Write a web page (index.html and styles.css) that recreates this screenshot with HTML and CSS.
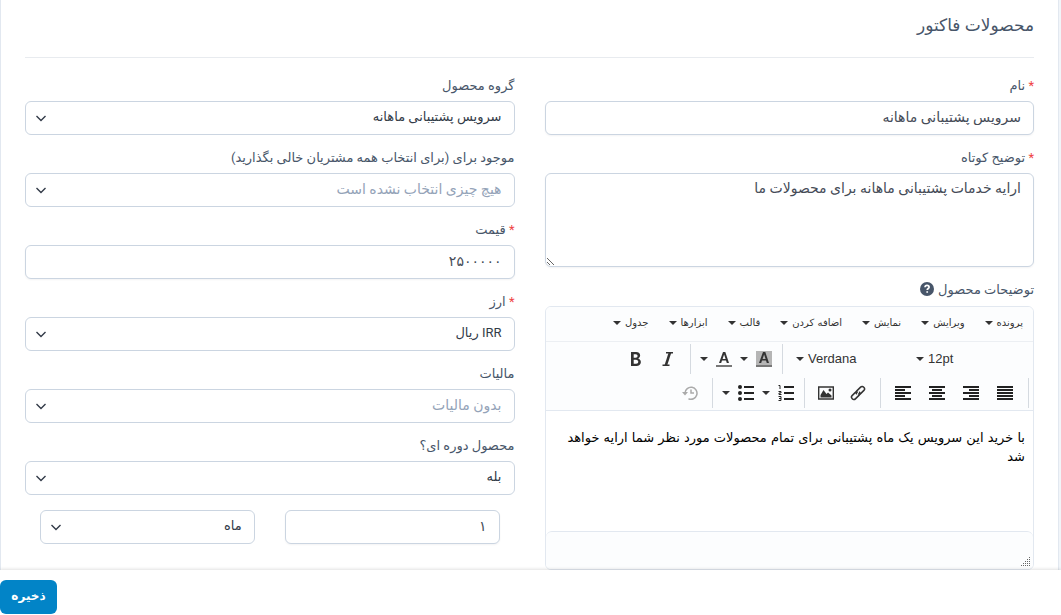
FILE: index.html
```html
<!DOCTYPE html>
<html lang="fa" dir="rtl">
<head>
<meta charset="utf-8">
<meta name="viewport" content="width=device-width, initial-scale=1">
<title>محصولات فاکتور</title>
<link rel="stylesheet" href="styles.css">
</head>
<body>
<svg class="sprite" aria-hidden="true">
  <symbol id="chevron" viewBox="0 0 12 12"><path d="M1.500 4l4.500 4.500L10.500 4" fill="none" stroke="#333b48" stroke-width="1.400"/></symbol>
  <symbol id="caret" viewBox="0 0 8 4"><path d="M0 0h8L4 4z" fill="#333"/></symbol>
</svg>
<main class="viewport">
  <form class="panel" id="product-form">
    <h1 class="panel-title">محصولات فاکتور</h1>
    <div class="columns">
      <div class="column">
        <div class="field">
          <label class="label" for="name"><span class="required">*</span> نام</label>
          <input class="control" id="name" type="text" value="سرویس پشتیبانی ماهانه">
        </div>
        <div class="field">
          <label class="label" for="short"><span class="required">*</span> توضیح کوتاه</label>
          <textarea class="control control-area" id="short">ارایه خدمات پشتیبانی ماهانه برای محصولات ما</textarea>
        </div>
        <div class="field">
          <label class="label label-help" for="body">توضیحات محصول
            <svg width="14" height="14" viewBox="0 0 14 14"><circle cx="7" cy="7" r="7" fill="#475569"/><path d="M5 5.300C5.100 4 6 3.400 7 3.400c1.200 0 2.100.7 2.100 1.800C9.100 6.500 7.200 6.500 7.200 8.100M7.200 9.300v1.500" fill="none" stroke="#fff" stroke-width="1.700"/></svg>
          </label>
          <div class="editor">
            <div class="menubar">
              <button type="button" class="menu">پرونده<svg class="caret"><use href="#caret"/></svg></button>
              <button type="button" class="menu">ویرایش<svg class="caret"><use href="#caret"/></svg></button>
              <button type="button" class="menu">نمایش<svg class="caret"><use href="#caret"/></svg></button>
              <button type="button" class="menu">اضافه کردن<svg class="caret"><use href="#caret"/></svg></button>
              <button type="button" class="menu">قالب<svg class="caret"><use href="#caret"/></svg></button>
              <button type="button" class="menu">ابزارها<svg class="caret"><use href="#caret"/></svg></button>
              <button type="button" class="menu">جدول<svg class="caret"><use href="#caret"/></svg></button>
            </div>
            <div class="toolbar" dir="ltr">
              <div class="tools">
                <div class="group">
                  <button type="button" class="tool" aria-label="Bold"><svg width="16" height="16" viewBox="0 0 16 16"><path fill="#333" fill-rule="evenodd" d="M3 1h5.200c4.700 0 5.100 5 2 6.500C14.300 8.700 13.700 15 8.400 15H3zM5.700 3.200v3.500h2c2.500 0 2.500-3.500 0-3.500zM5.700 8.800v4H8c3 0 3-4 0-4z"/></svg></button>
                  <button type="button" class="tool" aria-label="Italic"><svg width="16" height="16" viewBox="0 0 16 16"><path d="M6 1.700h7M2.500 14.300h7" stroke="#333" stroke-width="1.400"/><path d="M10 1.500L5.800 14.500" stroke="#333" stroke-width="2.500"/></svg></button>
                </div>
                <div class="group">
                  <button type="button" class="tool split" aria-label="Text color"><svg class="caret"><use href="#caret"/></svg><svg width="16" height="18" viewBox="0 0 16 18"><path fill="#333" fill-rule="evenodd" d="M7 2h2.300L13 13h-2.200l-.8-2.500H6L5.200 13H3zM8.100 4.400L6.600 8.900h3z"/><path d="M0 15h16v2H0z" fill="#777"/></svg></button>
                  <button type="button" class="tool split" aria-label="Background color"><svg class="caret"><use href="#caret"/></svg><svg width="16" height="18" viewBox="0 0 16 18"><path d="M0 1h16v16H0z" fill="#b5b5b5"/><path fill="#333" fill-rule="evenodd" d="M7 2h2.300L13 13h-2.200l-.8-2.500H6L5.200 13H3zM8.100 4.400L6.600 8.900h3z"/><path d="M0 15h16v2H0z" fill="#777"/></svg></button>
                </div>
                <div class="group group-fonts">
                  <button type="button" class="picker picker-family"><svg class="caret"><use href="#caret"/></svg>Verdana</button>
                  <button type="button" class="picker"><svg class="caret"><use href="#caret"/></svg>12pt</button>
                </div>
              </div>
              <div class="tools">
                <div class="group">
                  <button type="button" class="tool" aria-label="Restore last draft"><svg width="16" height="16" viewBox="0 0 16 16" fill="none" stroke="#aaa" stroke-width="1.500"><path d="M3 8a6 6 0 1 1 3.500 5.700M9 4.500V8h3"/><path d="M0 7h6L3 10.500z" fill="#aaa" stroke="none"/></svg></button>
                </div>
                <div class="group">
                  <button type="button" class="tool split" aria-label="Bullet list"><svg class="caret"><use href="#caret"/></svg><svg width="16" height="16" viewBox="0 0 16 16" fill="#222"><circle cx="2" cy="2" r="2"/><circle cx="2" cy="8" r="2"/><circle cx="2" cy="14" r="2"/><path d="M6 1h10v2H6zM6 7h10v2H6zM6 13h10v2H6z"/></svg></button>
                  <button type="button" class="tool split" aria-label="Numbered list"><svg class="caret"><use href="#caret"/></svg><svg width="16" height="16" viewBox="0 0 16 16"><path d="M6 1h10v2H6zM6 7h10v2H6zM6 13h10v2H6z" fill="#222"/><path d="M.5.500H2V4M.500 6.500h2.500v1.500h-2v1.500h2.500M.5 11.500H3v4H.5M1 13.500h2" fill="none" stroke="#222"/></svg></button>
                </div>
                <div class="group">
                  <button type="button" class="tool" aria-label="Image"><svg width="16" height="16" viewBox="0 0 16 16"><path d="M.7 2h14.600v12H.7z" fill="none" stroke="#333" stroke-width="1.400"/><path d="M2.500 12.500V10l3-5 3 4 1.500-1.500 3.500 3v2z" fill="#333"/><circle cx="12" cy="5" r="1.500" fill="#333"/></svg></button>
                  <button type="button" class="tool" aria-label="Link"><svg width="16" height="16" viewBox="0 0 16 16" fill="none" stroke="#333" stroke-width="1.500"><path d="M6.800 9.200c-1-1-1-2.300 0-3.300l3.800-3.800c2-2 5.300 1.300 3.300 3.300l-3 3c-.8.8-1.800.9-2.800.3"/><path d="M9.200 6.800c1 1 1 2.300 0 3.300l-3.800 3.800c-2 2-5.300-1.300-3.300-3.300l3-3c.8-.8 1.800-.9 2.800-.3"/></svg></button>
                </div>
                <div class="group group-align">
                  <button type="button" class="tool" aria-label="Align left"><svg width="16" height="14" viewBox="0 0 16 14"><path d="M0 0h16v2H0zM0 3h10v2H0zM0 6h16v2H0zM0 9h10v2H0zM0 12h16v2H0z" fill="#222"/></svg></button>
                  <button type="button" class="tool" aria-label="Align center"><svg width="16" height="14" viewBox="0 0 16 14"><path d="M0 0h16v2H0zM3 3h10v2H3zM0 6h16v2H0zM3 9h10v2H3zM0 12h16v2H0z" fill="#222"/></svg></button>
                  <button type="button" class="tool" aria-label="Align right"><svg width="16" height="14" viewBox="0 0 16 14"><path d="M0 0h16v2H0zM6 3h10v2H6zM0 6h16v2H0zM6 9h10v2H6zM0 12h16v2H0z" fill="#222"/></svg></button>
                  <button type="button" class="tool" aria-label="Justify"><svg width="16" height="14" viewBox="0 0 16 14"><path d="M0 0h16v2H0zM0 3h16v2H0zM0 6h16v2H0zM0 9h16v2H0zM0 12h16v2H0z" fill="#222"/></svg></button>
                </div>
              </div>
            </div>
            <textarea class="editor-body" id="body">با خرید این سرویس یک ماه پشتیبانی برای تمام محصولات مورد نظر شما ارایه خواهد شد</textarea>
            <div class="statusbar"><svg width="10" height="10" viewBox="0 0 10 10"><path d="M9.500 0v10M7.500 2v8M5.500 4v6M3.500 6v4M1.500 8v2" stroke="#666" stroke-dasharray="1 1"/></svg></div>
          </div>
        </div>
      </div>
      <div class="column">
        <div class="field">
          <label class="label" for="group">گروه محصول</label>
          <div class="select"><select class="control" id="group"><option>سرویس پشتیبانی ماهانه</option></select><svg class="chevron"><use href="#chevron"/></svg></div>
        </div>
        <div class="field">
          <label class="label" for="clients">موجود برای (برای انتخاب همه مشتریان خالی بگذارید)</label>
          <div class="select"><select class="control muted" id="clients"><option>هیچ چیزی انتخاب نشده است</option></select><svg class="chevron"><use href="#chevron"/></svg></div>
        </div>
        <div class="field">
          <label class="label" for="price"><span class="required">*</span> قیمت</label>
          <input class="control" id="price" type="text" value="۲۵۰۰۰۰۰">
        </div>
        <div class="field">
          <label class="label" for="currency"><span class="required">*</span> ارز</label>
          <div class="select"><select class="control" id="currency"><option>IRR ریال</option></select><svg class="chevron"><use href="#chevron"/></svg></div>
        </div>
        <div class="field">
          <label class="label" for="tax">مالیات</label>
          <div class="select"><select class="control muted" id="tax"><option>بدون مالیات</option></select><svg class="chevron"><use href="#chevron"/></svg></div>
        </div>
        <div class="field">
          <label class="label" for="recurring">محصول دوره ای؟</label>
          <div class="select"><select class="control" id="recurring"><option>بله</option></select><svg class="chevron"><use href="#chevron"/></svg></div>
        </div>
        <div class="period">
          <input class="control" type="text" value="۱" aria-label="تعداد">
          <div class="select"><select class="control" aria-label="دوره"><option>ماه</option></select><svg class="chevron"><use href="#chevron"/></svg></div>
        </div>
      </div>
    </div>
  </form>
</main>
<footer class="footer"><button class="save" type="submit" form="product-form">ذخیره</button></footer>
</body>
</html>
```
FILE: styles.css
```css
* { box-sizing: border-box; }
body {
  margin: 0;
  height: 100vh;
  display: flex;
  flex-direction: column;
  background: #f1f5f9;
  color: #475569;
  font: 13px/20px Roboto, "DejaVu Sans", sans-serif;
}
button, input, select, textarea { font: inherit; color: inherit; }
button { border: 0; background: none; padding: 0; }
.sprite { display: none; }
.viewport { flex: 1; min-height: 0; overflow: hidden; padding-right: 2px; }
.panel {
  padding: 0 24px 24px;
  background: #fff;
  border: solid #e2e8f0;
  border-width: 0 1px;
}
.panel-title {
  margin: 0 0 18px;
  padding: 10px 0 17px;
  border-bottom: 1px solid #e8ebef;
  font-size: 17px;
  line-height: 30px;
  font-weight: 400;
}
.columns { display: grid; grid-template-columns: 1fr 1fr; gap: 30px; }
.field { display: flex; flex-direction: column; margin-bottom: 13px; }
.label { height: 25px; line-height: 20px; }
.label-help { display: flex; align-items: flex-start; gap: 4px; height: 26px; }
.label-help svg { margin-top: 2px; }
.required { color: #ef4444; }
.control {
  display: block;
  width: 100%;
  height: 34px;
  margin: 0;
  padding: 4px 12px 6px;
  border: 1px solid #cbd5e1;
  border-radius: 6px;
  background: #fff;
  color: #454b57;
  box-shadow: 0 1px 2px #0f172a0d;
  font-size: 14px;
  line-height: 20px;
}
.control-area { height: 94px; }
.select { position: relative; }
.select .control { appearance: none; color: #333b48; box-shadow: none; font-size: 13px; }
.select .muted { color: #94a3b8; font-size: 14px; }
.chevron { position: absolute; left: 10px; top: 11px; width: 12px; height: 12px; pointer-events: none; }
.period { display: grid; grid-template-columns: 1fr 1fr; gap: 30px; padding: 2px 15px 0; }
.editor { border: 1px solid #e2e8f0; border-radius: 6px; overflow: hidden; }
.menubar {
  display: flex;
  gap: 20px;
  height: 35px;
  padding: 0 10px 2px;
  background: #fcfdfe;
  border-bottom: 1px solid #eceff3;
}
.menu { display: flex; align-items: center; gap: 4px; font: 10px/20px "DejaVu Sans", sans-serif; color: #333; }
.caret { width: 8px; height: 4px; flex: none; }
.toolbar { background: #fcfdfe; border-bottom: 1px solid #e2e8f0; }
.tools { display: flex; justify-content: flex-end; padding: 2px 4px; }
.group {
  display: flex;
  height: 30px;
  padding: 0 6px 0 5px;
  border-right: 1px solid #d5dae0;
}
.group-fonts { border-color: transparent; padding-left: 13px; }
.tool { display: flex; align-items: center; justify-content: center; width: 32px; }
.split { width: 40px; gap: 8px; }
.group-align .tool { width: 34px; }
.picker { display: flex; align-items: center; gap: 4px; width: 106px; font: 13px/20px "Liberation Sans", sans-serif; color: #333; }
.picker-family { width: 120px; }
.editor-body {
  display: block;
  width: 100%;
  height: 120px;
  padding: 17px 8px;
  border: 0;
  resize: none;
  overflow: hidden;
  color: #000;
  font: 13px/19px "DejaVu Sans", sans-serif;
}
.statusbar {
  display: flex;
  align-items: flex-end;
  height: 38px;
  padding: 2px 3px;
  border-top: 1px solid #e2e8f0;
  border-radius: 6px 6px 0 0;
  background: #fcfdfe;
}
.footer {
  position: relative;
  height: 45px;
  padding-top: 10px;
  display: flex;
  justify-content: flex-end;
  align-items: flex-start;
  background: #fff;
  box-shadow: 0 -1px 3px #0000001f;
}
.save { width: 57px; height: 34px; border-radius: 6px; background: #0284c7; color: #fff; font-size: 12px; font-weight: 700; padding-bottom: 3px; }
```
